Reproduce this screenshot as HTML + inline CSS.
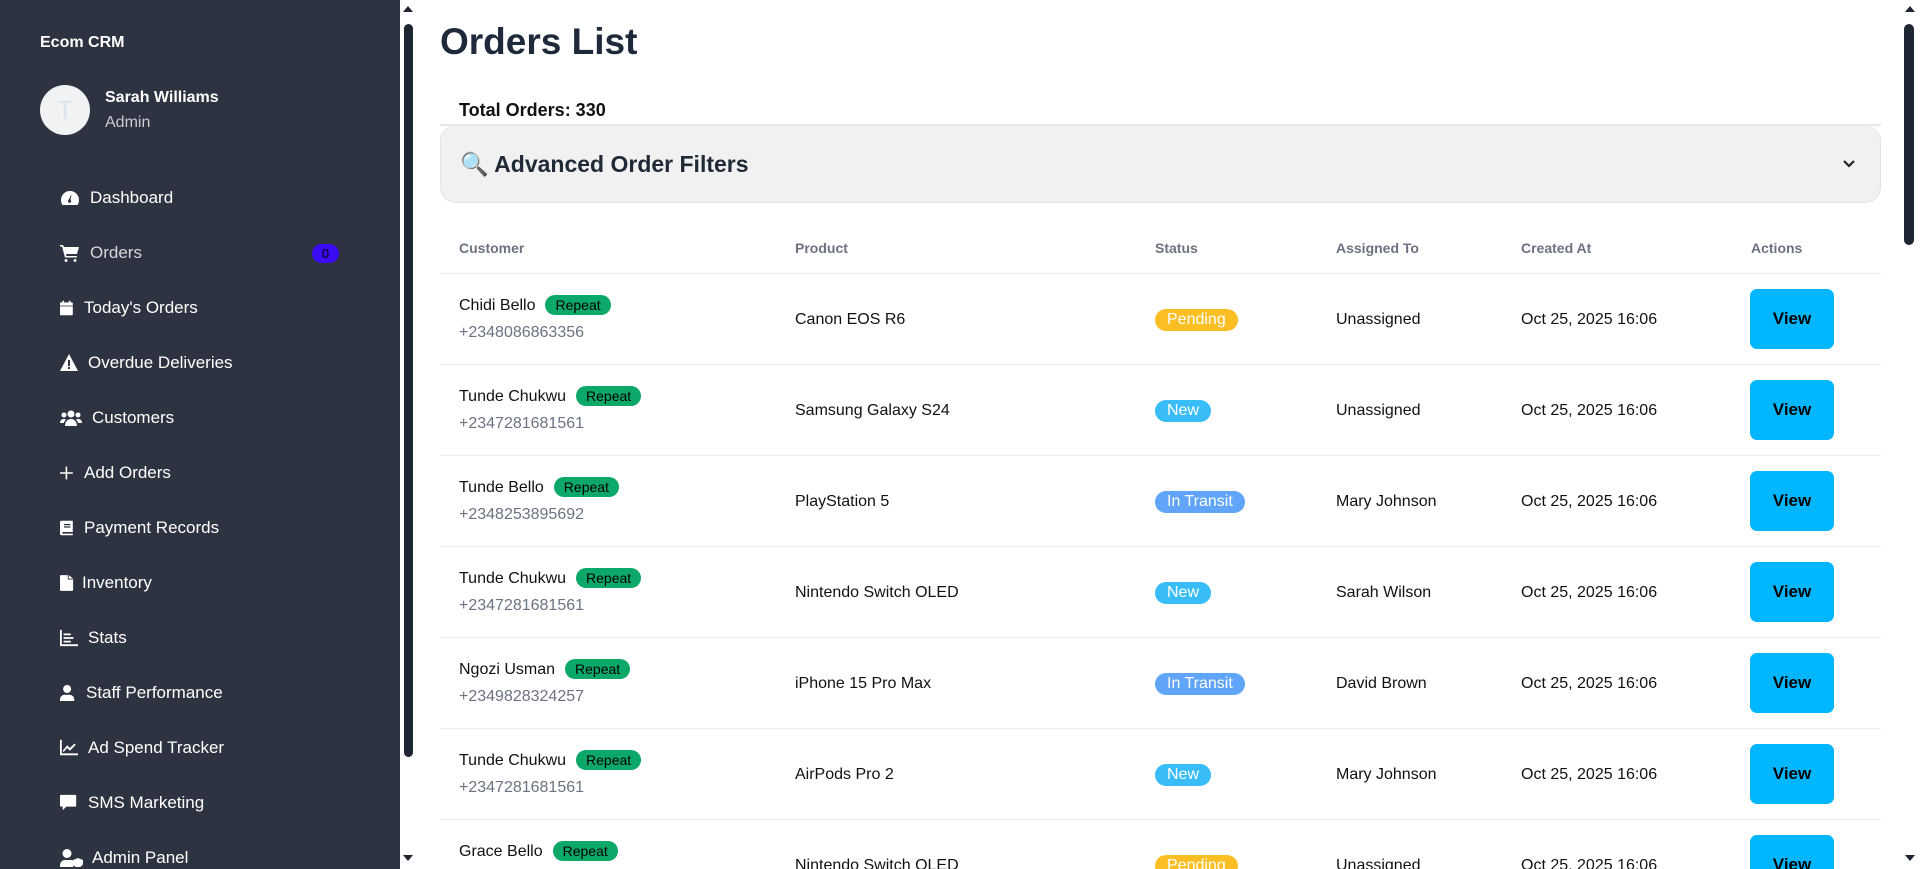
<!DOCTYPE html>
<html><head><meta charset="utf-8"><style>
*{margin:0;padding:0;box-sizing:border-box}
html,body{width:1920px;height:869px;overflow:hidden}
body{font-family:"Liberation Sans",sans-serif;background:#fff;position:relative;color:#1f2937}
#wrap{position:absolute;left:0;top:0;width:1920px;height:869px;overflow:hidden}
.sb{position:absolute;left:0;top:0;width:400px;height:869px;background:#2d3341;color:#fff}
.abs{position:absolute}
.nav{position:absolute;left:60px;font-size:17px;color:#fff;display:flex;align-items:center;white-space:nowrap}
.nav svg{width:20px;height:18px;margin-right:10px;fill:#fff}
.sbs{position:absolute;left:400px;top:0;width:16px;height:869px;background:#fff}
.ps{position:absolute;left:1900px;top:0;width:20px;height:869px;background:#fff}
.th{position:absolute;top:240px;font-size:14px;font-weight:bold;color:#6b7280}
.row{position:absolute;left:440px;width:1441px;height:91px;border-bottom:1px solid #eceef0}
.row div{position:absolute}
.nm{left:19px;top:21px;font-size:16px;color:#111}
.rp{display:inline-block;background:#0ca86a;color:#000;font-size:14px;padding:2px 10px;border-radius:10px;margin-left:10px}
.ph{left:19px;top:50px;font-size:16px;color:#6b7280}
.pr{left:355px;top:37px;font-size:16px;color:#111}
.st{left:715px;top:35px;font-size:16px;color:#fff;padding:2px 12px;border-radius:12px}
.as{left:896px;top:37px;font-size:16px;color:#111}
.cr{left:1081px;top:37px;font-size:16px;color:#111}
.vb{left:1310px;top:15px;width:84px;height:60px;background:#00b6ff;border-radius:7px;font-weight:bold;font-size:17px;color:#000;display:flex;align-items:center;justify-content:center}
</style></head><body><div id="wrap">
<div class="sb">
<div class="abs" style="left:40px;top:34px;font-size:16px;font-weight:bold">Ecom CRM</div>
<div class="abs" style="left:40px;top:85px;width:50px;height:50px;border-radius:50%;background:#f1f2f4;color:#dde3ea;font-size:26px;text-align:center;line-height:50px">T</div>
<div class="abs" style="left:105px;top:89px;font-size:16px;font-weight:bold">Sarah Williams</div>
<div class="abs" style="left:105px;top:114px;font-size:16px;color:#c8ccd3">Admin</div>
<div class="nav" style="top:188px"><svg viewBox="0 0 20 18"><path d="M10 2a9 9 0 0 0-9 9c0 2 .6 3.5 1.5 5h15c.9-1.5 1.5-3 1.5-5a9 9 0 0 0-9-9zm0 12a2 2 0 0 1-1-3.7L11 6l.5.2-1 4.5A2 2 0 0 1 10 14z"/></svg>Dashboard</div>
<div class="nav" style="top:243px;color:#d4d7dc"><svg viewBox="0 0 20 18"><path d="M0 1h3l1 2h15l-2 7H6l.5 2H17v1.5H5L2 2.5H0z M6 15a1.5 1.5 0 1 0 .1 0zM15 15a1.5 1.5 0 1 0 .1 0z"/></svg>Orders</div>
<div class="abs" style="left:312px;top:244px;width:27px;height:19px;border-radius:10px;background:#3b0bf5;color:#000;font-size:13px;text-align:center;line-height:19px">0</div>
<div class="nav" style="top:298px"><svg viewBox="0 0 20 18" style="width:16px;margin-right:8px"><path d="M3 0h2v2h6V0h2v2h2a1 1 0 0 1 1 1v3H0V3a1 1 0 0 1 1-1h2zM0 7h16v10a1 1 0 0 1-1 1H1a1 1 0 0 1-1-1z"/></svg>Today's Orders</div>
<div class="nav" style="top:353px"><svg viewBox="0 0 20 18" style="margin-right:8px"><path d="M9 0l9 17H0zm-1 6v6h2V6zm0 7v2h2v-2z"/></svg>Overdue Deliveries</div>
<div class="nav" style="top:408px"><svg viewBox="0 0 22 18" style="width:22px"><circle cx="11" cy="5" r="3.5"/><circle cx="4" cy="6" r="2.5"/><circle cx="18" cy="6" r="2.5"/><path d="M5 17c0-4 2.5-7 6-7s6 3 6 7zM0 14c0-2.5 1.5-4 4-4 1 0 2 .3 2 .5C4.5 12 4 13 4 14zM22 14c0-2.5-1.5-4-4-4-1 0-2 .3-2 .5 1.5 1.5 2 2.5 2 3.5z"/></svg>Customers</div>
<div class="nav" style="top:463px"><svg viewBox="0 0 20 18" style="width:16px;margin-right:8px"><path d="M7 1h2v7h7v2H9v7H7v-7H0V8h7z"/></svg>Add Orders</div>
<div class="nav" style="top:518px"><svg viewBox="0 0 20 18" style="width:16px;margin-right:8px"><path d="M2 0h14v14H3v2h13v2H2a2 2 0 0 1-2-2V2a2 2 0 0 1 2-2zm3 4v1.5h8V4zm0 3v1.5h8V7z"/></svg>Payment Records</div>
<div class="nav" style="top:573px"><svg viewBox="0 0 16 18" style="width:14px;margin-right:8px"><path d="M1 0h8v5h6v12a1 1 0 0 1-1 1H1a1 1 0 0 1-1-1V1a1 1 0 0 1 1-1zm9 0l5 4h-5z"/></svg>Inventory</div>
<div class="nav" style="top:628px"><svg viewBox="0 0 20 18" style="width:18px;margin-right:10px"><path d="M0 0h2v16h18v2H0zM4 4h8v2H4zm0 4h11v2H4zm0 4h8v2H4z"/></svg>Stats</div>
<div class="nav" style="top:683px"><svg viewBox="0 0 18 18" style="width:16px;margin-right:10px"><circle cx="8" cy="4.5" r="4.5"/><path d="M0 18v-2a5 5 0 0 1 5-5h6a5 5 0 0 1 5 5v2z"/></svg>Staff Performance</div>
<div class="nav" style="top:738px"><svg viewBox="0 0 20 18" style="width:18px;margin-right:10px"><path d="M0 0h2v15h18v2H0zm3 12l5-6 3 3 5-5 1.5 1.5L11 12 8 9l-4 4.5z"/></svg>Ad Spend Tracker</div>
<div class="nav" style="top:793px"><svg viewBox="0 0 20 18" style="width:18px;margin-right:10px"><path d="M1 0h16a1 1 0 0 1 1 1v11a1 1 0 0 1-1 1H7l-4 4v-4H1a1 1 0 0 1-1-1V1a1 1 0 0 1 1-1z"/></svg>SMS Marketing</div>
<div class="nav" style="top:848px"><svg viewBox="0 0 24 18" style="width:24px;margin-right:8px"><circle cx="7" cy="4.5" r="4.5"/><path d="M0 18v-2a5 5 0 0 1 5-5h6c1 0 2 .3 2.5.7V18zM18 9l5 2v3c0 2.5-2 4-5 4.5-3-.5-5-2-5-4.5v-3z"/></svg>Admin Panel</div>
</div>
<div class="sbs"><div class="abs" style="left:3px;top:6px;border:5px solid transparent;border-bottom:6px solid #1e2532;border-top:0"></div><div class="abs" style="left:4px;top:24px;width:9px;height:733px;border-radius:5px;background:#1e2634"></div><div class="abs" style="left:3px;top:855px;border:5px solid transparent;border-top:6px solid #1e2532;border-bottom:0"></div></div>
<div class="ps"><div class="abs" style="left:5px;top:6px;border:5px solid transparent;border-bottom:6px solid #1e2532;border-top:0"></div><div class="abs" style="left:4px;top:24px;width:10px;height:221px;border-radius:5px;background:#1e2634"></div><div class="abs" style="left:5px;top:855px;border:5px solid transparent;border-top:6px solid #1e2532;border-bottom:0"></div></div>

<div class="abs" style="left:440px;top:21px;font-size:37px;font-weight:bold;color:#1e293b">Orders List</div>
<div class="abs" style="left:459px;top:100px;font-size:18px;font-weight:bold;color:#111">Total Orders: 330</div>
<div class="abs" style="left:440px;top:124px;width:1441px;height:2px;background:#e5e7eb"></div>
<div class="abs" style="left:440px;top:126px;width:1441px;height:77px;background:#f1f1f1;border:1px solid #e3e3e3;border-top:0;border-radius:14px 14px 16px 16px"></div>
<div class="abs" style="left:460px;top:151px;font-size:23px;font-weight:bold;color:#1f2937">🔍 Advanced Order Filters</div>
<svg class="abs" style="left:1842px;top:159px" width="14" height="10" viewBox="0 0 14 10"><path d="M2 2l5 5 5-5" stroke="#222" stroke-width="2.2" fill="none"/></svg>

<div class="th" style="left:459px">Customer</div>
<div class="th" style="left:795px">Product</div>
<div class="th" style="left:1155px">Status</div>
<div class="th" style="left:1336px">Assigned To</div>
<div class="th" style="left:1521px">Created At</div>
<div class="th" style="left:1751px">Actions</div>
<div class="abs" style="left:440px;top:273px;width:1441px;height:1px;background:#eceef0"></div>

<div class="row" style="top:274px"><div class="nm">Chidi Bello<span class="rp">Repeat</span></div><div class="ph">+2348086863356</div><div class="pr">Canon EOS R6</div><div class="st" style="background:#fbbf24">Pending</div><div class="as">Unassigned</div><div class="cr">Oct 25, 2025 16:06</div><div class="vb">View</div></div>
<div class="row" style="top:365px"><div class="nm">Tunde Chukwu<span class="rp">Repeat</span></div><div class="ph">+2347281681561</div><div class="pr">Samsung Galaxy S24</div><div class="st" style="background:#38bdf8">New</div><div class="as">Unassigned</div><div class="cr">Oct 25, 2025 16:06</div><div class="vb">View</div></div>
<div class="row" style="top:456px"><div class="nm">Tunde Bello<span class="rp">Repeat</span></div><div class="ph">+2348253895692</div><div class="pr">PlayStation 5</div><div class="st" style="background:#60a5fa">In Transit</div><div class="as">Mary Johnson</div><div class="cr">Oct 25, 2025 16:06</div><div class="vb">View</div></div>
<div class="row" style="top:547px"><div class="nm">Tunde Chukwu<span class="rp">Repeat</span></div><div class="ph">+2347281681561</div><div class="pr">Nintendo Switch OLED</div><div class="st" style="background:#38bdf8">New</div><div class="as">Sarah Wilson</div><div class="cr">Oct 25, 2025 16:06</div><div class="vb">View</div></div>
<div class="row" style="top:638px"><div class="nm">Ngozi Usman<span class="rp">Repeat</span></div><div class="ph">+2349828324257</div><div class="pr">iPhone 15 Pro Max</div><div class="st" style="background:#60a5fa">In Transit</div><div class="as">David Brown</div><div class="cr">Oct 25, 2025 16:06</div><div class="vb">View</div></div>
<div class="row" style="top:729px"><div class="nm">Tunde Chukwu<span class="rp">Repeat</span></div><div class="ph">+2347281681561</div><div class="pr">AirPods Pro 2</div><div class="st" style="background:#38bdf8">New</div><div class="as">Mary Johnson</div><div class="cr">Oct 25, 2025 16:06</div><div class="vb">View</div></div>
<div class="row" style="top:820px;height:49px;border-bottom:0;overflow:hidden"><div class="nm">Grace Bello<span class="rp">Repeat</span></div><div class="pr">Nintendo Switch OLED</div><div class="st" style="background:#fbbf24">Pending</div><div class="as">Unassigned</div><div class="cr">Oct 25, 2025 16:06</div><div class="vb">View</div></div>
</div></body></html>
